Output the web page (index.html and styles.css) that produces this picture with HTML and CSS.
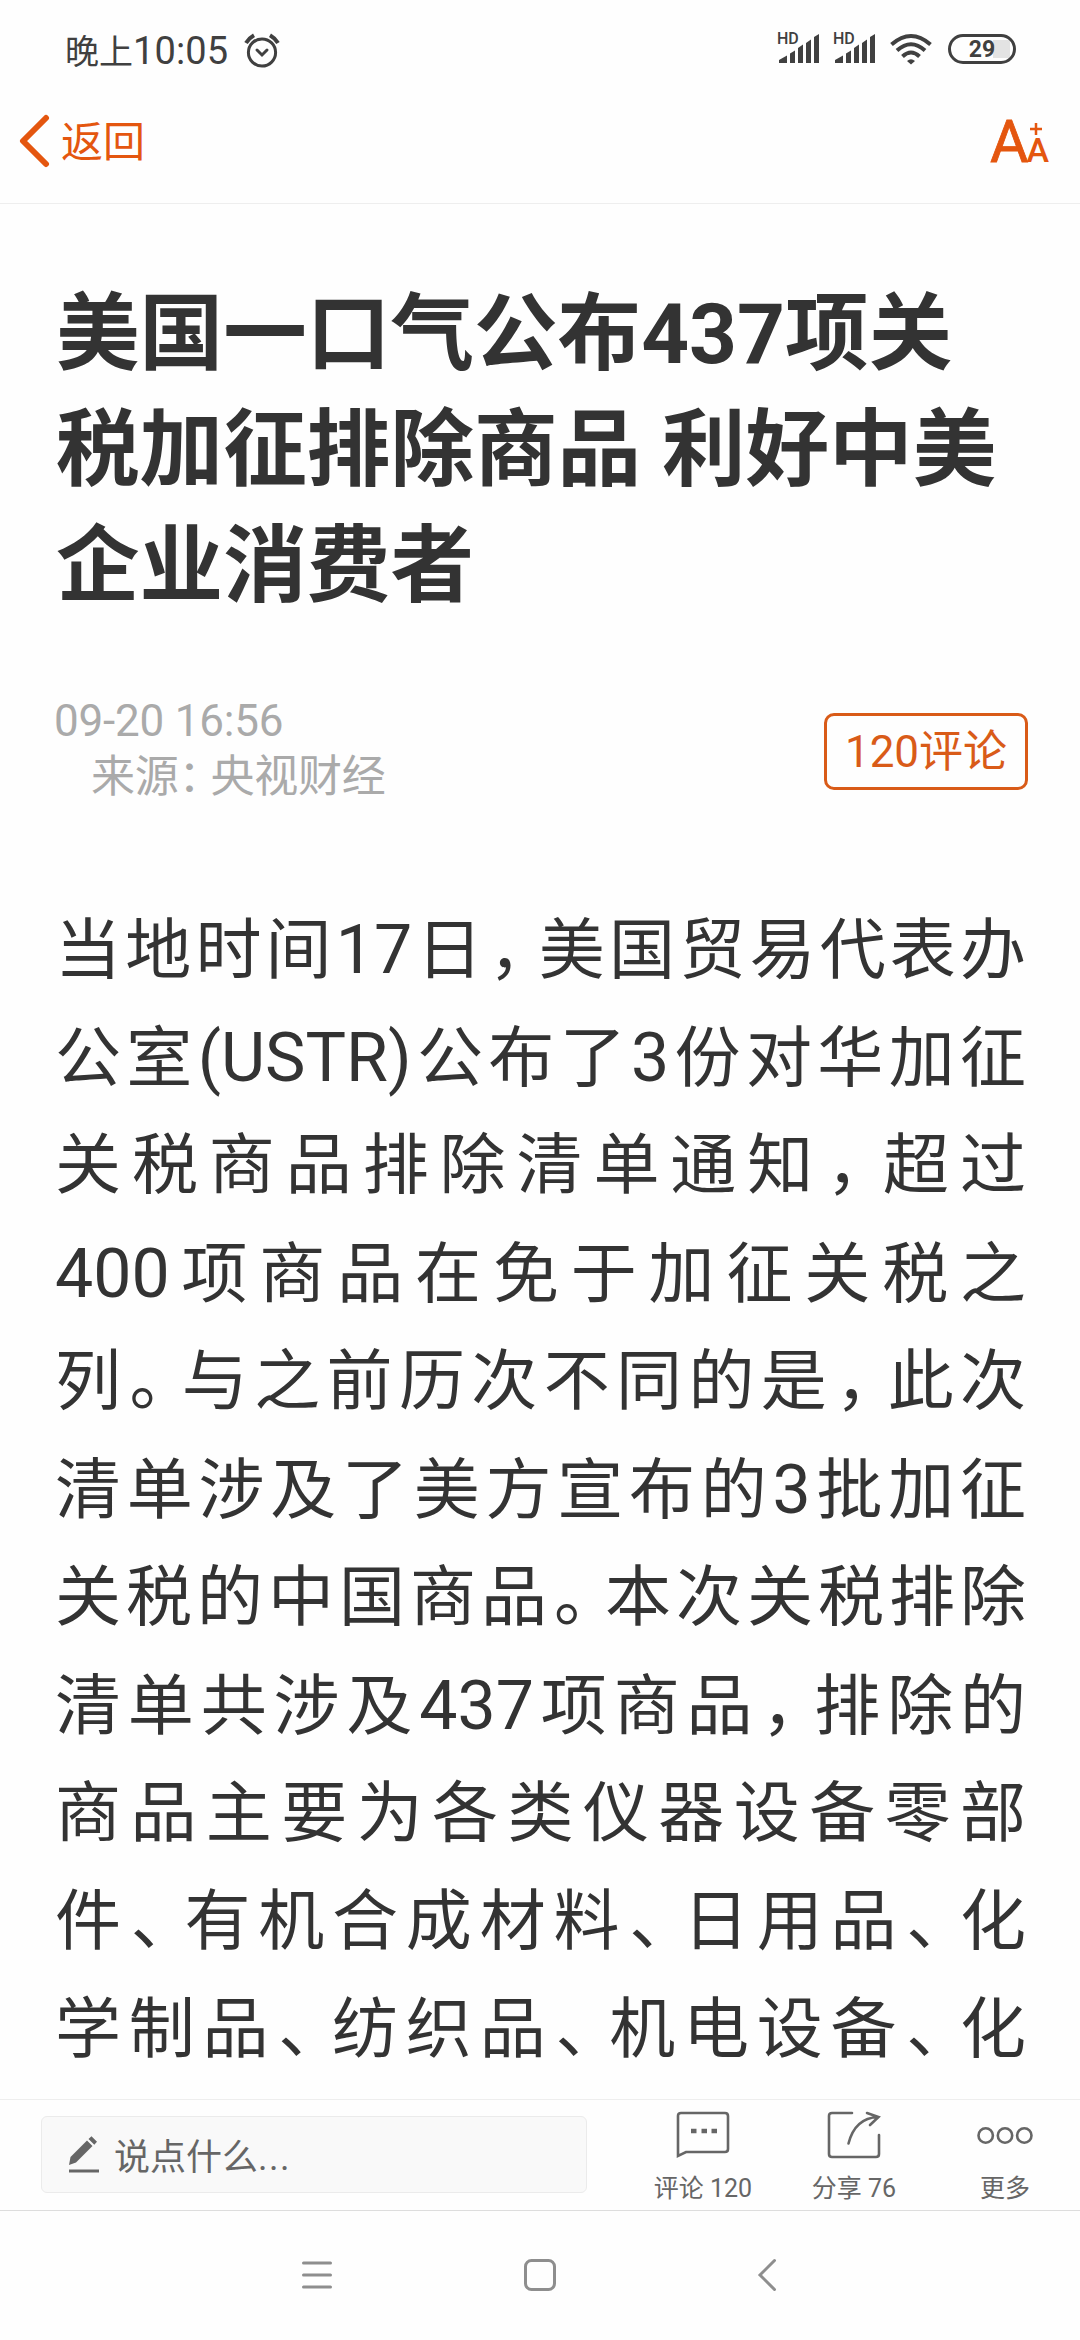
FILE: index.html
```
<!DOCTYPE html>
<html lang="zh-CN">
<head>
  <meta charset="UTF-8" />
  <meta name="viewport" content="width=device-width, initial-scale=1.0" />
  <title>美国一口气公布437项关税加征排除商品</title>
  <link rel="stylesheet" href="styles.css">
</head>
<body>
  <div class="status-bar">
    <div class="status-left">
      <span class="clock">晚上<b>10:05</b></span>
      <svg class="alarm" width="36" height="36" viewBox="0 0 36 36">
        <circle cx="18" cy="19.5" r="13.6"/>
        <path d="M13 17l5 5 5-5" stroke-linecap="round"/>
        <path d="M2 10Q5 5 10 2.200M34 10Q31 5 26 2.200" stroke-width="4"/>
      </svg>
    </div>
    <div class="status-right">
      <div class="signal">
        <span>HD</span>
        <svg width="42" height="32" viewBox="0 0 42 32"><path d="M1 31v-3l8-4.500v7.500zM12 31V21.500l5-3V31zM20 31V16l5-3.500V31zM28 31V11l5-3.500V31zM36 31V5l5-3v29z"/></svg>
      </div>
      <div class="signal">
        <span>HD</span>
        <svg width="42" height="32" viewBox="0 0 42 32"><path d="M1 31v-3l8-4.500v7.500zM12 31V21.500l5-3V31zM20 31V16l5-3.500V31zM28 31V11l5-3.500V31zM36 31V5l5-3v29z"/></svg>
      </div>
      <svg class="wifi" width="42" height="32" viewBox="0 0 42 32">
        <path d="M1.500 11.500Q21-5.500 40.500 11.500M7 17.500Q21 5 35 17.500M12.500 23.500Q21 15.500 29.500 23.500"/>
        <path d="M17 28q4-3.500 8 0l-4 3.500z" class="dot"/>
      </svg>
      <div class="battery"><span>29</span></div>
    </div>
  </div>

  <div class="header">
    <div class="back">
      <svg width="31" height="54" viewBox="0 0 31 54"><path d="M27 4L4 27l23 23"/></svg>
      <span>返回</span>
    </div>
    <div class="font-size">
      <span class="big">A</span>
      <div class="small-box">
        <svg width="14" height="14" viewBox="0 0 14 14"><path d="M7 1v12M1 7h12"/></svg>
        <span class="small">A</span>
      </div>
    </div>
  </div>

  <div class="article">
    <h1>美国一口气公布437项关<br>税加征排除商品 利好中美<br>企业消费者</h1>
    <div class="meta">
      <div class="info">
        <p>09-20 16:56</p>
        <p class="source">来源<i class="colon">：</i>央视财经</p>
      </div>
      <div class="comment-btn">120评论</div>
    </div>
    <div class="content">
      <p>当地时间<b>17</b>日<i>，</i>美国贸易代表办</p>
      <p>公室<b>(USTR)</b>公布了<b>3</b>份对华加征</p>
      <p>关税商品排除清单通知<i>，</i>超过</p>
      <p><b>400</b>项商品在免于加征关税之</p>
      <p>列<i>。</i>与之前历次不同的是<i>，</i>此次</p>
      <p>清单涉及了美方宣布的<b>3</b>批加征</p>
      <p>关税的中国商品<i>。</i>本次关税排除</p>
      <p>清单共涉及<b>437</b>项商品<i>，</i>排除的</p>
      <p>商品主要为各类仪器设备零部</p>
      <p>件<i>、</i>有机合成材料<i>、</i>日用品<i>、</i>化</p>
      <p>学制品<i>、</i>纺织品<i>、</i>机电设备<i>、</i>化</p>
    </div>
  </div>

  <div class="toolbar">
    <div class="input-box">
      <svg width="32" height="38" viewBox="0 0 32 38">
        <path d="M1 29l1.500-8L19 4.500l5.500 5.500L8 26.500zM20.500 3l3-2.700 5.500 5.500-2.700 3z"/>
        <path d="M1 33.500h30v3H1z"/>
      </svg>
      <span>说点什么<b>...</b></span>
    </div>
    <div class="tool comments">
      <svg width="54" height="50" viewBox="0 0 54 50">
        <path d="M2 45V5q0-3 3-3h44q3 0 3 3v33q0 3-3 3H10z"/>
        <path d="M15 20h5.500M25.500 20h5.500M35.500 20h5.500" stroke-width="4.500"/>
      </svg>
      <span>评论 120</span>
    </div>
    <div class="tool share">
      <svg width="54" height="50" viewBox="0 0 54 50">
        <path d="M25 2H5Q2 2 2 5v38q0 3 3 3h44q3 0 3-3V24" stroke-linecap="round"/>
        <path d="M21.500 32.500Q28 7 51 6M40 2l11.500 4L43 14" stroke-linecap="round"/>
      </svg>
      <span>分享 76</span>
    </div>
    <div class="tool more">
      <svg width="56" height="50" viewBox="0 0 56 50">
        <circle cx="8.700" cy="24.500" r="7.200"/>
        <circle cx="28" cy="24.500" r="7.200"/>
        <circle cx="47.300" cy="24.500" r="7.200"/>
      </svg>
      <span>更多</span>
    </div>
  </div>

  <div class="nav">
    <svg width="32" height="34" viewBox="0 0 32 34"><path d="M2.500 5h27M2.500 17h27M2.500 29h27"/></svg>
    <svg class="home" width="34" height="34" viewBox="0 0 34 34"><rect x="2.500" y="2.500" width="29" height="29" rx="6"/></svg>
    <svg width="20" height="34" viewBox="0 0 20 34"><path d="M17.500 2.500L3 17l14.500 14.500"/></svg>
  </div>
</body>
</html>
```
FILE: styles.css
```
* {
  margin: 0;
  padding: 0;
  box-sizing: border-box;
}
body {
  width: 1080px;
  height: 2340px;
  display: flex;
  flex-direction: column;
  overflow: hidden;
  background: #fefefe;
  color: #333;
  font-family: Roboto, "Noto Sans CJK SC", sans-serif;
}
svg {
  display: block;
  flex: none;
  fill: none;
}
i {
  font-style: normal;
}

/* status bar */
.status-bar {
  height: 98px;
  flex: none;
  display: flex;
  justify-content: space-between;
  padding: 0 64px 0 65px;
  color: #404040;
}
.status-left {
  display: flex;
  align-items: center;
  gap: 18px;
  height: 102px;
}
.clock {
  display: flex;
  align-items: baseline;
  font-size: 34px;
  line-height: 50px;
}
.clock b {
  font-weight: 400;
  font-size: 38px;
  width: 93px;
  letter-spacing: 0.1px;
}
.alarm {
  stroke: #404040;
  stroke-width: 3;
}
.status-right {
  display: flex;
  gap: 14px;
  padding-top: 32px;
}
.signal {
  position: relative;
  width: 42px;
}
.signal span {
  position: absolute;
  left: -1px;
  top: 0;
  font-size: 16px;
  font-weight: 500;
  line-height: 13px;
}
.signal svg {
  fill: #404040;
}
.wifi {
  margin-top: 1px;
  stroke: #404040;
  stroke-width: 4;
}
.wifi .dot {
  fill: #404040;
  stroke: none;
}
.battery {
  width: 68px;
  height: 30px;
  margin: 2px 0 0 2px;
  border: 3px solid #404040;
  border-radius: 15px;
  background: linear-gradient(#e3e3e3, #e3e3e3) 42px 3px / 17px 18px no-repeat;
  font-size: 23px;
  font-weight: 700;
  line-height: 25px;
  text-align: center;
}

/* header */
.header {
  height: 106px;
  flex: none;
  display: flex;
  justify-content: space-between;
  border-bottom: 1px solid #eee;
  color: #e4560f;
}
.back {
  display: flex;
  align-items: flex-start;
  padding: 16px 0 0 19px;
}
.back svg {
  stroke: #e4560f;
  stroke-width: 6;
  stroke-linecap: round;
  stroke-linejoin: round;
}
.back span {
  margin: 1px 0 0 11px;
  font-size: 42px;
  line-height: 56px;
}
.font-size {
  display: flex;
  align-items: flex-start;
  padding: 14px 32px 0 0;
}
.font-size .big {
  font-size: 59px;
  line-height: 60px;
  -webkit-text-stroke: 0.8px #e4560f;
}
.small-box {
  margin: 10px 0 0 -2px;
}
.small-box svg {
  margin-left: 3px;
  stroke: #e4560f;
  stroke-width: 2.5;
}
.small-box .small {
  display: block;
  font-size: 34px;
  font-weight: 500;
  line-height: 28px;
  letter-spacing: -1px;
}

/* article */
.article {
  height: 1895px;
  flex: none;
  overflow: hidden;
  padding: 72px 56px 0;
}
h1 {
  font-size: 83.6px;
  font-weight: 700;
  line-height: 116px;
  white-space: nowrap;
}
.meta {
  display: flex;
  justify-content: space-between;
  margin: 69px -4px 0 -2px;
  font-size: 44px;
}
.info {
  color: #aaa;
  line-height: 56px;
  letter-spacing: -0.2px;
}
.source {
  padding-left: 37px;
}
.source .colon {
  font-feature-settings: "halt";
  padding: 0 10px 0 0;
}
.comment-btn {
  width: 204px;
  height: 77px;
  margin-top: 20px;
  border: 3px solid #d95b18;
  border-radius: 10px;
  color: #d95b18;
  line-height: 73px;
  text-align: center;
}
.content {
  margin: 91px -2px 0 -1px;
  font-size: 66px;
  line-height: 108px;
}
.content p {
  height: 108px;
  text-align: justify;
  text-align-last: justify;
  white-space: nowrap;
}
.content b {
  font-size: 68px;
  font-weight: 400;
}
/* punctuation narrower than a full character */
.content i {
  font-feature-settings: "halt";
  padding: 0 13px 0 2px;
}

/* bottom toolbar */
.toolbar {
  height: 112px;
  flex: none;
  display: flex;
  align-items: flex-start;
  border-top: 1px solid #eee;
  border-bottom: 1px solid #ddd;
  color: #666;
}
.input-box {
  width: 546px;
  height: 77px;
  margin: 16px 51px 0 41px;
  padding-left: 26px;
  display: flex;
  align-items: center;
  background: #f9f9f9;
  border: 1px solid #ebebeb;
  border-radius: 6px;
  font-size: 36px;
}
.input-box span {
  margin-top: -2px;
}
.input-box b {
  font-weight: 400;
  letter-spacing: 1.5px;
}
.input-box svg {
  fill: #666;
  margin-right: 14px;
}
.tool {
  width: 130px;
  padding-top: 11px;
  display: flex;
  flex-direction: column;
  align-items: center;
  font-size: 25px;
  line-height: 36px;
  white-space: nowrap;
}
.tool svg {
  stroke: #666;
  stroke-width: 2.6;
}
.tool span {
  margin-top: 10px;
}
.share {
  margin-left: 21px;
}
.more {
  margin-left: 21px;
}

/* system navigation */
.nav {
  height: 129px;
  flex: none;
  display: flex;
  align-items: center;
  padding: 0 0 2px 301px;
}
.nav svg {
  stroke: #8e8e8e;
  stroke-width: 3;
  stroke-linecap: round;
}
.nav .home {
  margin: 0 200px 0 190px;
}
```
